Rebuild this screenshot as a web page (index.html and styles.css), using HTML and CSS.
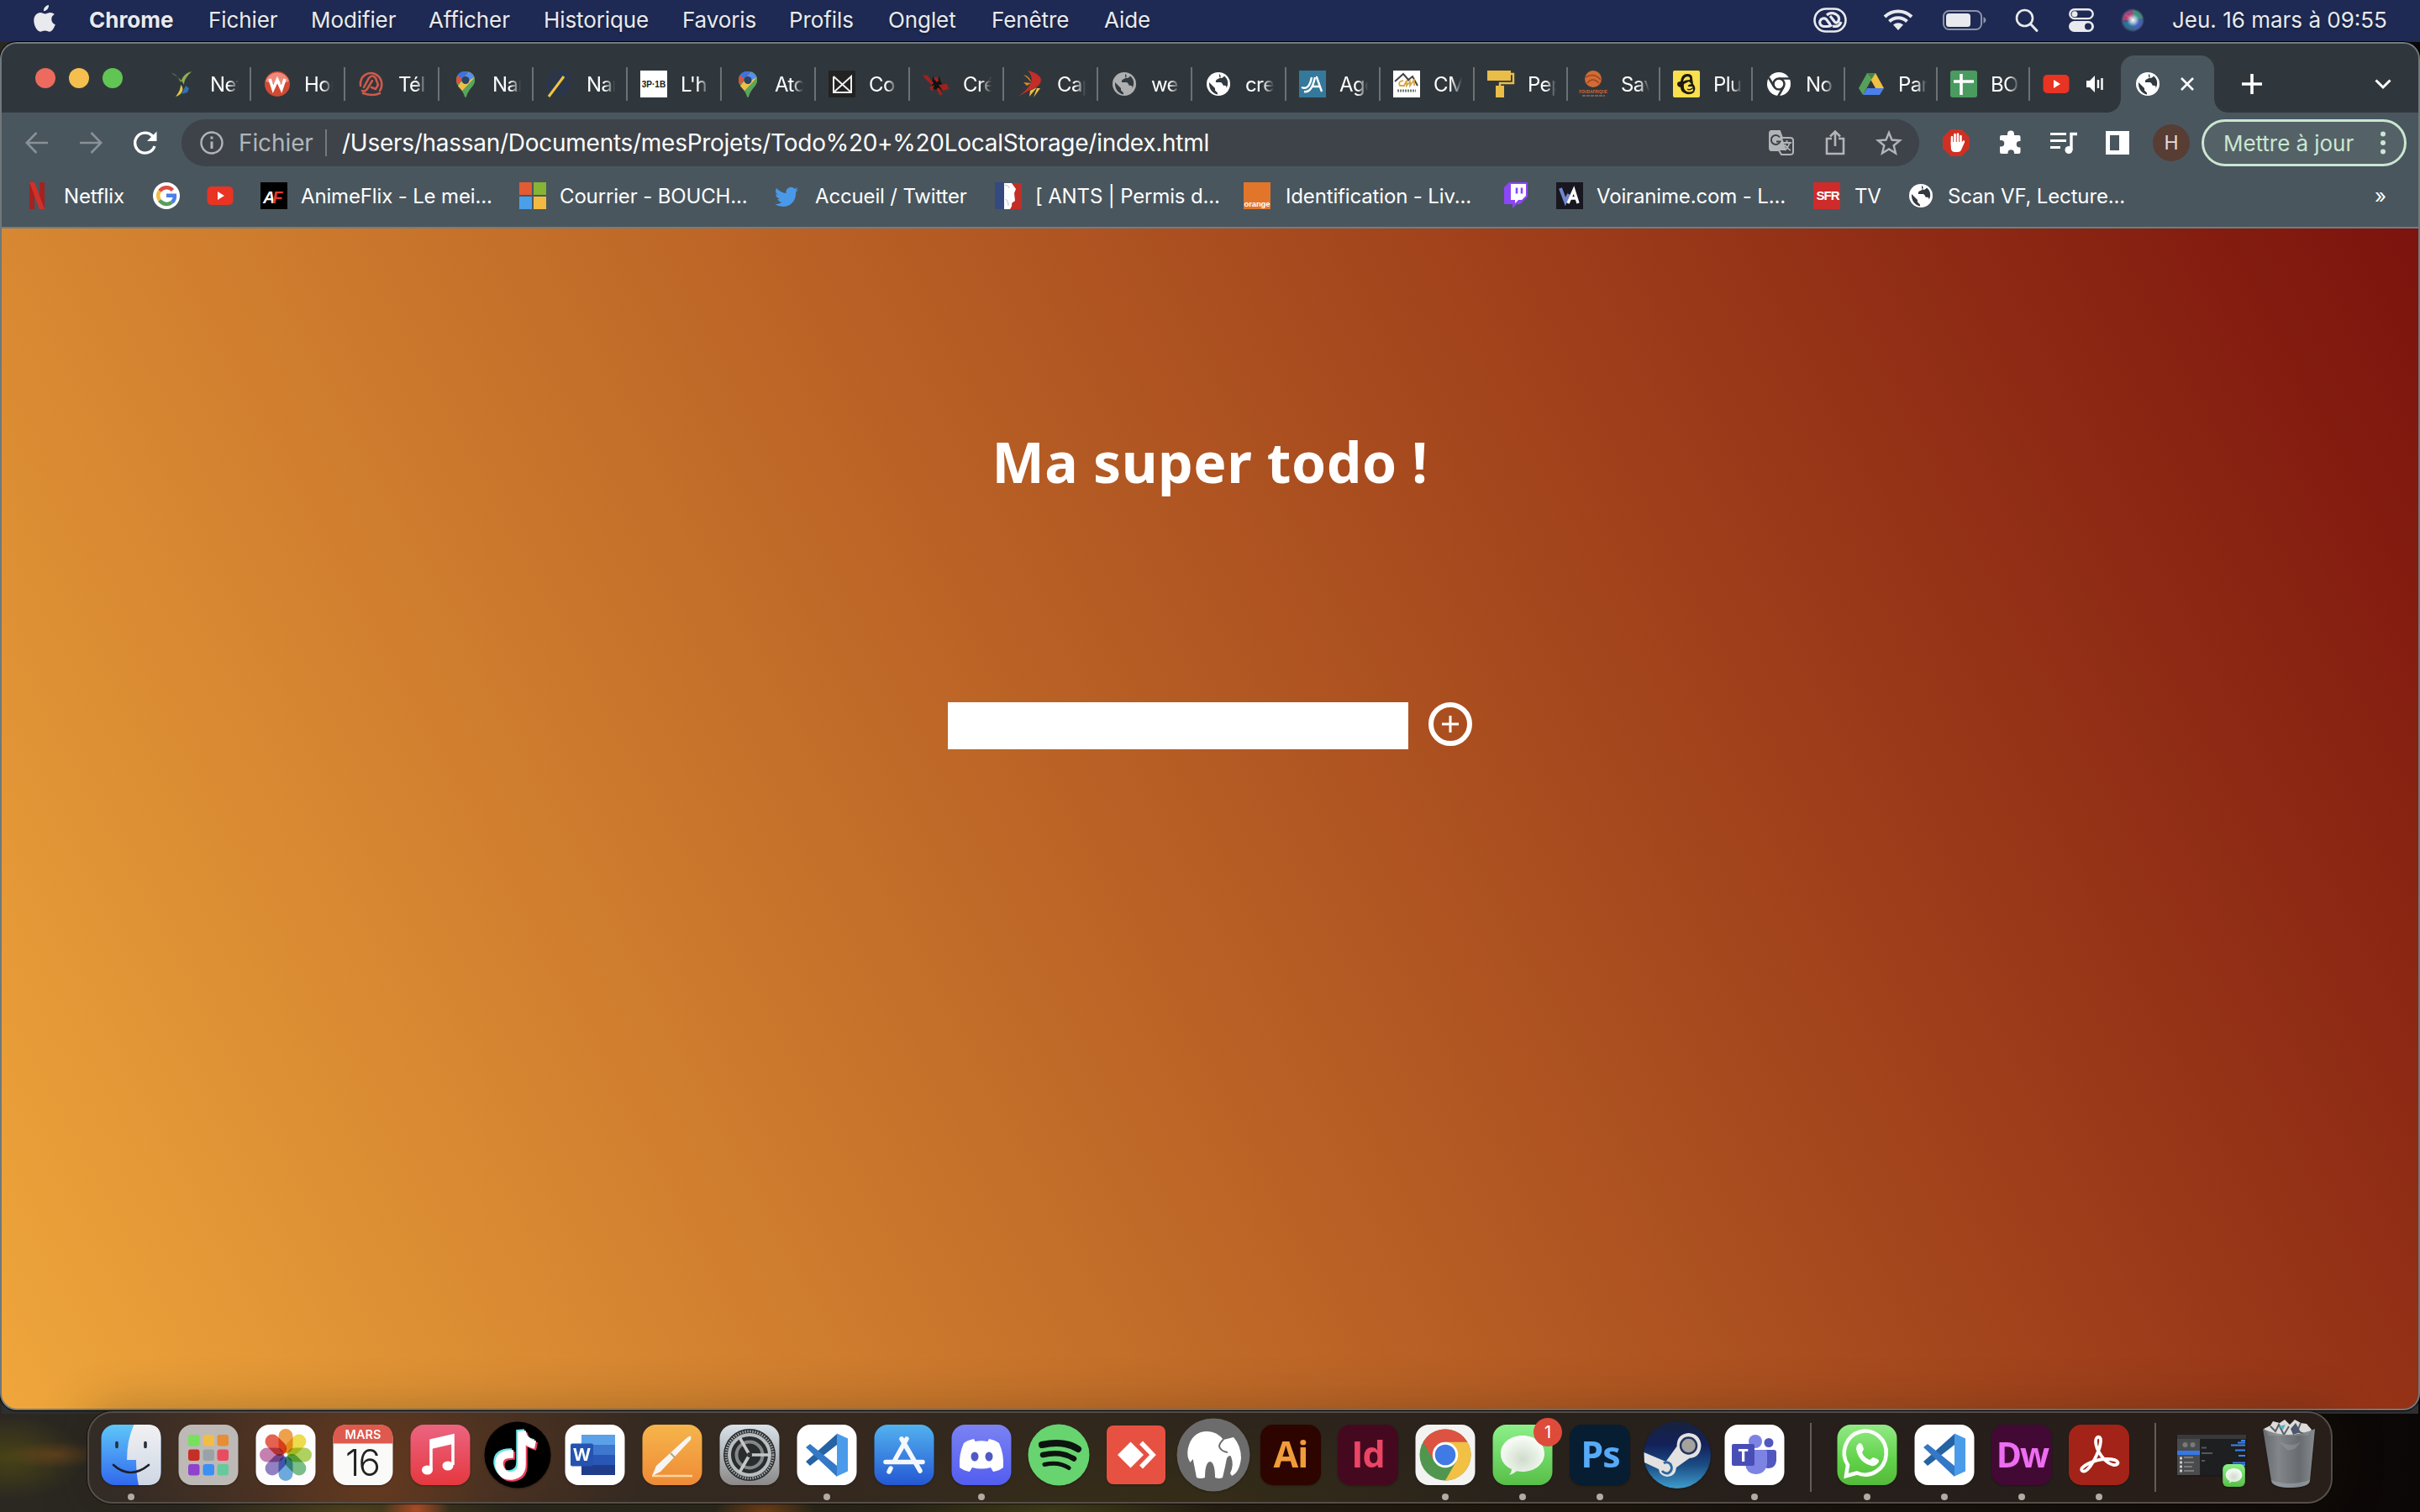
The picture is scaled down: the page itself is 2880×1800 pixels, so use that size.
FILE: index.html
```html
<!DOCTYPE html>
<html lang="fr">
<head>
<meta charset="utf-8">
<title>Ma super todo !</title>
<link rel="stylesheet" href="styles.css">
</head>
<body>
<svg class="defs" width="0" height="0">
  <defs>
    <linearGradient id="gFinder" x1="0" y1="0" x2="0" y2="1"><stop offset="0" stop-color="#5fc6f8"/><stop offset="1" stop-color="#3169ee"/></linearGradient>
    <linearGradient id="gFace" x1="0" y1="0" x2="0" y2="1"><stop offset="0" stop-color="#f1f1f3"/><stop offset="1" stop-color="#ced7e4"/></linearGradient>
    <linearGradient id="gMusic" x1="0" y1="0" x2="0" y2="1"><stop offset="0" stop-color="#ec6480"/><stop offset="1" stop-color="#e5383f"/></linearGradient>
    <linearGradient id="gPages" x1="0" y1="0" x2="0" y2="1"><stop offset="0" stop-color="#f6b54b"/><stop offset="1" stop-color="#ef8a36"/></linearGradient>
    <linearGradient id="gPrefs" x1="0" y1="0" x2="0" y2="1"><stop offset="0" stop-color="#d8e2ea"/><stop offset="1" stop-color="#8b8988"/></linearGradient>
    <linearGradient id="gStore" x1="0" y1="0" x2="0" y2="1"><stop offset="0" stop-color="#52b2ef"/><stop offset="1" stop-color="#2457d3"/></linearGradient>
    <linearGradient id="gDiscord" x1="0" y1="0" x2="0" y2="1"><stop offset="0" stop-color="#7a82f2"/><stop offset="1" stop-color="#535df0"/></linearGradient>
    <linearGradient id="gGreen" x1="0" y1="0" x2="0" y2="1"><stop offset="0" stop-color="#8cf089"/><stop offset="1" stop-color="#57bf47"/></linearGradient>
    <linearGradient id="gWhats" x1="0" y1="0" x2="0" y2="1"><stop offset="0" stop-color="#92ea86"/><stop offset=".6" stop-color="#5fd248"/><stop offset="1" stop-color="#55b93b"/></linearGradient>
    <linearGradient id="gSteam" x1="0" y1="0" x2="0" y2="1"><stop offset="0" stop-color="#17233c"/><stop offset=".35" stop-color="#13215a"/><stop offset=".65" stop-color="#1b4c84"/><stop offset="1" stop-color="#3f9ccb"/></linearGradient>
    <linearGradient id="gBin" x1="0" y1="0" x2="1" y2="0"><stop offset="0" stop-color="#6b7176"/><stop offset=".3" stop-color="#8a8f93"/><stop offset=".7" stop-color="#6d7377"/><stop offset="1" stop-color="#8e9498"/></linearGradient>
    <radialGradient id="gBubble" cx=".5" cy=".6" r=".6"><stop offset="0" stop-color="#cfdccb"/><stop offset="1" stop-color="#fbfffa"/></radialGradient>
    <radialGradient id="gSiri"><stop offset="0" stop-color="#fff"/><stop offset=".5" stop-color="#c5dcec" stop-opacity=".7"/><stop offset="1" stop-color="#8fb6d8" stop-opacity="0"/></radialGradient>
    <symbol id="globe" viewBox="0 0 32 32"><circle cx="16" cy="16" r="14" fill="currentColor"/><path d="M5 14l7 7v2.500l3 3v2C8 27 4.500 21 5 14zM17 4c3 2 1.500 5-1.500 6-2.500 1-3 2-2.500 4h6c2 1 2 3 3 4 3-1 4 1 3.500 3 3-5 2-11-2.500-14.500-2 2-4 4-6 .500z" fill="#323a3f"/></symbol>
    <symbol id="pin" viewBox="0 0 32 32"><path d="M16 1C9 1 5 6 5 11.500 5 18 12 21 15 31q1 2 2 0C20 21 27 18 27 11.500 27 6 23 1 16 1z" fill="#58a55c"/><path d="M16 1C11 1 8 3 6.500 5.500L12 10 20 1.700Q18 1 16 1z" fill="#3d72e0"/><path d="M20 1.700L11.500 12 6 17Q5 14 5 11.500 5 8 6.500 5.500L12 10z" fill="#d6543f"/><path d="M20 1.700Q25.500 4 26.500 9L12 24 7 18.500z" fill="#f0bf45"/><path d="M20 1.700Q27 4.500 27 11.500 27 16 23 20L13 25.500 26 9z" fill="#58a55c"/><path d="M20 1.700Q25.500 4 26.500 8L18 13 15 8z" fill="#568ff1"/><circle cx="16" cy="11.500" r="4.500" fill="#2a4368"/></symbol>
    <symbol id="yt" viewBox="0 0 32 32"><rect x=".5" y="5" width="31" height="22" rx="5" fill="#e93323"/><path d="M13 11l8 5-8 5z" fill="#fff"/></symbol>
    <symbol id="vscode" viewBox="0 0 72 72"><rect x=".5" width="71" height="72" rx="16" fill="#fff"/><path d="M11 44l5 5L48 24V11z" fill="#2563a4"/><path d="M11 27l5-4 32 26v13z" fill="#3478c6"/><path d="M48 10.500l13 6v39l-13 6z" fill="#4a9bea"/></symbol>
    <symbol id="messages" viewBox="0 0 72 72"><rect x=".5" width="71" height="72" rx="16" fill="url(#gGreen)"/><path d="M36 13c15 0 26 9.500 26 21.500S51 56 36 56q-4 0-7-.800Q25 59 20 60q3-3 3-7-13-6-13-18.500C10 22.500 21 13 36 13z" fill="url(#gBubble)"/></symbol>
  </defs>
</svg>

<div class="desktop">
  <header class="menubar">
    <nav class="menus">
      <svg class="apple" viewBox="0 0 26 32"><path d="M18 0c.4 3.600-2.600 7.300-6 7.200C11.600 3.700 14.600.4 18 0zM24.800 11c-2.400 1.500-3.600 3.400-3.500 6 0 3 1.600 5.200 4.500 6.300C24 28 21.800 31.700 19 31.700c-2.200 0-2.900-1.200-5.500-1.200-2.700 0-3.500 1.200-5.500 1.200C4.500 31.700.3 25 .3 18.600c0-6 3.800-9.600 7.800-9.600 2.300 0 3.900 1.400 5.700 1.400 1.700 0 3.200-1.500 6.100-1.500 1.900 0 3.700.7 4.900 2.100z" fill="#e9eaee"/></svg>
      <b>Chrome</b><span>Fichier</span><span>Modifier</span><span>Afficher</span><span>Historique</span><span>Favoris</span><span>Profils</span><span>Onglet</span><span>Fenêtre</span><span>Aide</span>
    </nav>
    <div class="status">
      <svg viewBox="0 0 40 30" width="40" height="30"><rect x="1.500" y="1.500" width="37" height="27" rx="13.500" fill="none" stroke="#e9eaee" stroke-width="2.600"/><path d="M20 20l-4.500-6a4.800 4.800 0 10-3.500 8.500h5q3 0 5-2M20 10l5 6.500q2 3.500 5-.500 2-5-3-8-7-3-11 1M23 22q8 2 10-5" fill="none" stroke="#e9eaee" stroke-width="3.200"/></svg>
      <svg viewBox="0 0 36 26" width="36" height="26"><path d="M2 9a23 23 0 0132 0M7.500 14.500a15 15 0 0121 0" fill="none" stroke="#e9eaee" stroke-width="4"/><path d="M18 25l-6-6.500q6-4.500 12 0z" fill="#e9eaee"/></svg>
      <svg viewBox="0 0 52 24" width="52" height="24"><rect x="1" y="1" width="45" height="22" rx="6.500" fill="none" stroke="#8d93ab" stroke-width="2"/><rect x="4" y="4" width="29" height="16" rx="3.500" fill="#e9eaee"/><path d="M48.500 8q3 1.500 3 4t-3 4z" fill="#8d93ab"/></svg>
      <svg viewBox="0 0 28 28" width="28" height="28"><circle cx="11.500" cy="11.500" r="9.500" fill="none" stroke="#e9eaee" stroke-width="2.600"/><path d="M18.500 18.500l7.500 8" stroke="#e9eaee" stroke-width="3" stroke-linecap="round"/></svg>
      <svg viewBox="0 0 30 28" width="30" height="28"><rect x="1.300" y="1.300" width="27.400" height="10.800" rx="5.400" fill="none" stroke="#e9eaee" stroke-width="2.400"/><circle cx="7" cy="6.700" r="3.500" fill="#e9eaee"/><rect x="0" y="15" width="30" height="13" rx="6.500" fill="#e9eaee"/><circle cx="23" cy="21.500" r="4" fill="#1e2a53"/></svg>
      <svg viewBox="0 0 28 28" width="28" height="28"><circle cx="14" cy="14" r="13.500" fill="#3a4a68"/><path d="M2 14Q3 3 14 2q4 5-1 9-5 5-11 3z" fill="#a8437c"/><path d="M14 2q10 1 12 10-6 3-11 0z" fill="#3f8f78"/><path d="M2 15q6 2 12-1l2 12Q4 25 2 15z" fill="#2f6f95"/><path d="M26 13q0 10-10 13-2-6 0-12 5-3 10-1z" fill="#4562b8"/><path d="M5 8q8-1 10 6-6 0-10-6z" fill="#e0436b"/><circle cx="14.500" cy="14" r="8" fill="url(#gSiri)"/></svg>
      <time>Jeu. 16 mars à 09:55</time>
    </div>
  </header>

  <main class="window">
    <div class="tabstrip">
      <div class="lights"><i class="red"></i><i class="yellow"></i><i class="green"></i></div>
      <div class="tabs">
        <div class="tab"><svg viewBox="0 0 32 32"><path d="M2 3c5 1 9 6 11 11 2-6 5-11 13-13-5 5-9 10-9 16-3-6-8-10-15-14z" fill="#8fae52"/><path d="M13 17c5 4 2 12-6 14 4-5 6-9 6-14z" fill="#e5c83e"/><path d="M14 28l5-10 4 3-2 5z" fill="#2f71b8"/></svg><span>Net</span></div>
        <div class="tab"><svg viewBox="0 0 32 32"><circle cx="16" cy="16" r="15" fill="#d14a33"/><path d="M2 13a14.500 14.500 0 0128 0q-14 5-28 0z" fill="#ee8a7c"/><path d="M7 10l4 12 5-11 5 11 4-12" fill="none" stroke="#fff" stroke-width="3.600"/></svg><span>Hor</span></div>
        <div class="tab"><svg viewBox="0 0 32 32"><g fill="none" stroke="#cf5a4b" stroke-width="2.600" stroke-linecap="round"><path d="M3 18C2 6 12 1 20 4c9 4 10 14 6 20"/><path d="M7 20L13 9q4-5 8 0l3 8-3 5-5-2"/><path d="M17 12l-6 10q-3 4-6 2M6 27q12 4 20 0"/></g></svg><span>Tél</span></div>
        <div class="tab"><svg><use href="#pin"/></svg><span>Nan</span></div>
        <div class="tab"><svg viewBox="0 0 32 32"><g fill="none" stroke="#26355a" stroke-width="2.600"><path d="M4 24C-1 10 9 1 17 2q9 1 12 10M12 30l13-18M19 30l9-14M8 20L20 4"/></g><path d="M3 31L21 7" stroke="#f0c544" stroke-width="3"/></svg><span>Nan</span></div>
        <div class="tab"><svg viewBox="0 0 32 32"><rect width="32" height="32" fill="#fff"/><text x="16" y="20" text-anchor="middle" class="fav8">3P·1B</text></svg><span>L'h</span></div>
        <div class="tab"><svg><use href="#pin"/></svg><span>Ato</span></div>
        <div class="tab"><svg viewBox="0 0 32 32"><rect width="32" height="32" fill="#222"/><path d="M6 7v19h21V7L6 26M6 7l21 19" fill="none" stroke="#eee" stroke-width="2"/></svg><span>Co</span></div>
        <div class="tab"><svg viewBox="0 0 32 32"><g fill="#111"><circle cx="17" cy="17" r="6"/><path d="M12 6l3 9-4 8M20 6l-2 9 5 10"/></g><path d="M0 5l6 1 5 8-5-1zM19 17l10-1 2 6-7 2zM8 20l6-3-3 8z" fill="#a3211c"/><path d="M3 7l9 9M15 8l3 5M18 21l4 8" stroke="#a3211c" stroke-width="3.400"/></svg><span>Cré</span></div>
        <div class="tab"><svg viewBox="0 0 32 32"><path d="M13 0c18 4 24 16 1 24-4 2-8 5-12 7C14 21 24 12 13 0z" fill="#c42d28"/><path d="M8 5q8 2 9 9-3-5-9-9zM8 14l9 1-5 3z" fill="#e3872d"/><path d="M16 24l8-4-9 11zM24 21l4 0-8 11z" fill="#efc044"/></svg><span>Cap</span></div>
        <div class="tab dim"><svg><use href="#globe"/></svg><span>we</span></div>
        <div class="tab"><svg><use href="#globe"/></svg><span>cre</span></div>
        <div class="tab"><svg viewBox="0 0 32 32"><rect width="32" height="32" fill="#34799c"/><path d="M3 20q9 4 12-12M6 25q9 2 13-17M20 8h1l6 17M16 19h9" fill="none" stroke="#fff" stroke-width="2.400"/></svg><span>Age</span></div>
        <div class="tab"><svg viewBox="0 0 32 32"><rect width="32" height="32" fill="#fff"/><path d="M2 13L12 4l7 8M17 12l6-5 6 11" fill="none" stroke="#444" stroke-width="2"/><path d="M12 12q-7 1-4 6h5l3-6v6l4-5v5l5-7v7" fill="none" stroke="#d5a642" stroke-width="1.800"/><path d="M5 24h22" stroke="#777" stroke-width="3" stroke-dasharray="2 1"/></svg><span>CM</span></div>
        <div class="tab s1"><svg viewBox="0 0 32 32"><path d="M0 0h28v12H0zM10 18h10v14H10z" fill="#eabd48"/><path d="M28 4h3v11H15v4" fill="none" stroke="#eabd48" stroke-width="2.400"/></svg><span>Pep</span></div>
        <div class="tab s2"><svg viewBox="0 0 32 32"><circle cx="15" cy="10" r="10" fill="#d26b35"/><path d="M6 8q10-6 18 3M8 15q6-8 14 0" stroke="#9e4420" fill="none" stroke-width="1.500"/><text x="15" y="27" text-anchor="middle" class="fav5">FOUDAFRIQUE</text><path d="M2 30h27" stroke="#75605a" stroke-width="2" stroke-dasharray="4 1"/></svg><span>Sav</span></div>
        <div class="tab s2"><svg viewBox="0 0 32 32"><rect width="32" height="32" rx="2" fill="#fbe04d"/><path d="M9 13Q10 4 17 4q6 0 6 5l1 7q4 4 1 10-5 4-11 1-5-2-5-7-4-1-4-4 0-3 4-3z" fill="#1b1a14"/><path d="M12 13q1-6 6-6 3 1 2 4-5 0-8 2zM13 16l6-3 3 3q-5 1-4 3h5l1 5q-5 3-9 0-3-3-2-8z" fill="#fbe04d"/><path d="M17 22q3 2 6-1" stroke="#1b1a14" stroke-width="1.500" fill="none"/></svg><span>Plu</span></div>
        <div class="tab s2"><svg viewBox="0 0 32 32"><circle cx="16" cy="16" r="14" fill="#fff"/><g fill="none" stroke="#30373c" stroke-width="2.600"><circle cx="16" cy="16" r="6.500"/><path d="M16 9.500h13M10.500 19.500L4 8.500M21.500 19.500L15 31"/></g></svg><span>No</span></div>
        <div class="tab s2"><svg viewBox="0 0 32 32"><path d="M11 3L1 21l5 8 10-18z" fill="#55a05a"/><path d="M11 3h10l10 18H21z" fill="#f2c042"/><path d="M6 29l5-8h20l-5 8z" fill="#4a80ea"/><path d="M11 3h10l-5 8z" fill="#3a8a4a"/></svg><span>Par</span></div>
        <div class="tab s2"><svg viewBox="0 0 32 32"><rect width="32" height="32" rx="3" fill="#499b5f"/><path d="M13 4v25M4 13h24" stroke="#fff" stroke-width="3.600"/></svg><span>BO</span></div>
        <div class="tab muted"><svg><use href="#yt"/></svg><svg class="speaker" viewBox="0 0 22 22"><path d="M0 7h4l6-6v20l-6-6H0z" fill="#fff"/><path d="M14 6v10M18.500 4v14" stroke="#fff" stroke-width="2.400"/></svg></div>
        <div class="tab active"><svg><use href="#globe"/></svg><svg class="close" viewBox="0 0 18 18"><path d="M2 2l14 14M16 2L2 16" stroke="#fff" stroke-width="2.600"/></svg></div>
      </div>
      <svg class="plus" viewBox="0 0 24 24"><path d="M12 0v24M0 12h24" stroke="#fff" stroke-width="3.600"/></svg>
      <svg class="chev" viewBox="0 0 20 12"><path d="M1.500 1.500l8.500 8.500 8.500-8.500" fill="none" stroke="#fff" stroke-width="3"/></svg>
    </div>

    <div class="toolbar">
      <svg class="ic nav" viewBox="0 0 32 32"><path d="M29 16H4M15.500 4L3.800 16l11.700 12" fill="none" stroke="#899197" stroke-width="2.600"/></svg>
      <svg class="ic nav" viewBox="0 0 32 32"><path d="M3 16h25M16.500 4l11.700 12-11.700 12" fill="none" stroke="#899197" stroke-width="2.600"/></svg>
      <svg class="ic" viewBox="0 0 32 32"><path d="M28 20A12 12 0 1125.500 8" fill="none" stroke="#fff" stroke-width="3.400"/><path d="M30.500 2.500v11.500H19z" fill="#fff"/></svg>
      <div class="omnibox">
        <svg class="ic" viewBox="0 0 32 32"><circle cx="16" cy="16" r="12.500" fill="none" stroke="#b2b5b8" stroke-width="2.400"/><path d="M16 14.500V23M16 8.500v3" stroke="#b2b5b8" stroke-width="3"/></svg>
        <span class="scheme">Fichier</span><i class="bar"></i><span class="url">/Users/hassan/Documents/mesProjets/Todo%20+%20LocalStorage/index.html</span>
        <svg class="ic" viewBox="0 0 32 32"><path d="M4 2h10l3 8h9q4 0 4 3v14q0 3-4 3H16l-3-5H4q-2 0-2-3V5q0-3 2-3z" fill="none" stroke="#b2b5b8" stroke-width="2"/><path d="M3 2h11l8 23H3z" fill="#b2b5b8"/><path d="M14 9.500a5.500 5.500 0 10.500 5H10" fill="none" stroke="#3d4349" stroke-width="2"/><path d="M17 16h11M22.500 13v3M26 16q-3 7-6 9M20 18q3 5 7 7" fill="none" stroke="#b2b5b8" stroke-width="1.800"/></svg>
        <svg class="ic" viewBox="0 0 32 32"><path d="M12 11H6v18h20V11h-6M16 20V3M10 8.500L16 2.500l6 6" fill="none" stroke="#b2b5b8" stroke-width="2.600"/></svg>
        <svg class="ic" viewBox="0 0 32 32"><path d="M16 4l3.500 8.500 9.500.7-7.300 6L24 28.500l-8-5-8 5 2.300-9.300-7.300-6 9.500-.7z" fill="none" stroke="#b2b5b8" stroke-width="2.400"/></svg>
      </div>
      <div class="exts">
        <svg class="ic" viewBox="0 0 32 32"><path d="M9.500 0h13L32 9.500v13L22.500 32h-13L0 22.500v-13z" fill="#cf3022"/><path d="M11 9v9M14.500 6v11M18 5.500V17M21.500 8v10" stroke="#fff" stroke-width="2.600" stroke-linecap="round"/><path d="M9.700 15h13.100l2-2q2 0 1 3l-4 9q-1 2-4 2h-3q-5 0-5-5z" fill="#fff"/></svg>
        <svg class="ic" viewBox="0 0 32 32"><path d="M12 6.500a4 4 0 018 0V8h5.500q2 0 2 2v5h-1a3.700 3.700 0 000 7.500h1V28q0 2-2 2H20v-1.500a3.800 3.800 0 00-7.500 0V30H5q-2 0-2-2v-6.500h1.500a3.700 3.700 0 000-7.500H3v-4q0-2 2-2h7z" fill="#fff" transform="translate(1 -1)"/></svg>
        <svg class="ic" viewBox="0 0 32 32"><path d="M0 5.500h19M0 13.500h19M0 21.500h12" stroke="#fff" stroke-width="3"/><path d="M25 25V5.500h7" fill="none" stroke="#fff" stroke-width="3.400"/><circle cx="22" cy="24.500" r="4.500" fill="#fff"/></svg>
        <svg class="ic" viewBox="0 0 32 32"><path d="M4.500 4.500h16v23h-16z" fill="none" stroke="#fff" stroke-width="5"/><path d="M18 2h12v28H18z" fill="#fff"/></svg>
      </div>
      <span class="avatar">H</span>
      <span class="update"><em>Mettre à jour</em><svg viewBox="0 0 6 28" width="6" height="28"><g fill="#cbe7d0"><circle cx="3" cy="3.500" r="3"/><circle cx="3" cy="14" r="3"/><circle cx="3" cy="24.500" r="3"/></g></svg></span>
    </div>

    <div class="bookmarks">
      <svg class="ic" viewBox="0 0 32 32"><path d="M7 0h6v32H7zM19 0h6v32h-6z" fill="#a4221f"/><path d="M7 0h6l12 32h-6z" fill="#d42f28"/></svg><span>Netflix</span>
      <svg class="ic" viewBox="0 0 32 32"><circle cx="16" cy="16" r="16" fill="#fff"/><g fill="none" stroke-width="4.500"><path d="M23.500 9.500A10 10 0 008 10.500" stroke="#dc4e41"/><path d="M8 10.500a10 10 0 000 11" stroke="#f2be42"/><path d="M8 21.500a10 10 0 0014.500 2.300" stroke="#55a05a"/><path d="M22.500 23.800q4-3 3.400-8H16" stroke="#4a80ea"/></g></svg>
      <svg class="ic"><use href="#yt"/></svg>
      <svg class="ic" viewBox="0 0 32 32"><rect width="32" height="32"/><text x="3" y="25" class="af">A<tspan dx="-3" fill="#e23c32">F</tspan></text></svg><span>AnimeFlix - Le mei...</span>
      <svg class="ic" viewBox="0 0 32 32"><path d="M0 0h15v15H0z" fill="#e25b32"/><path d="M17 0h15v15H17z" fill="#86b435"/><path d="M0 17h15v15H0z" fill="#4aa0e8"/><path d="M17 17h15v15H17z" fill="#f3ba41"/></svg><span>Courrier - BOUCH...</span>
      <svg class="ic" viewBox="0 0 32 32"><path d="M30 8.500q-1.500.8-3.300 1 1.800-1 2.500-3.200-1.700 1-3.600 1.400a5.800 5.800 0 00-9.900 5.200Q8.900 12.500 4 6.900 1.400 12 5.800 14.700 4.400 14.600 3.200 14q0 4.400 4.600 5.700-1.200.3-2.500.1 1.200 3.700 5.400 4-3.800 2.900-8.700 2.400 12 6.300 20.500-1.500 5-5 4.700-13.300Q29 10.300 30 8.500z" fill="#4a99e9"/></svg><span>Accueil / Twitter</span>
      <svg class="ic" viewBox="0 0 32 32"><rect y="1" width="32" height="31" fill="#fff"/><path d="M0 0h11v32H0z" fill="#34497f"/><path d="M20 1h12v31H18q3-4 2-7l4-3-1-9 2-5z" fill="#c32e27"/><path d="M12 3q5 1 5 4M13 20q4 4 3 8" stroke="#bbb" fill="none"/></svg><span>[ ANTS | Permis d...</span>
      <svg class="ic" viewBox="0 0 32 32"><rect width="32" height="32" fill="#e1762b"/><text x="16" y="29" text-anchor="middle" class="or">orange</text></svg><span>Identification - Liv...</span>
      <svg class="ic" viewBox="0 0 32 32"><path d="M8 0h22v17l-9 9h-4l-5 5v-5H2V6z" fill="#8c45f7"/><path d="M10 2h18v14l-5 5h-4l-4 4v-4h-5z" fill="#fff"/><path d="M17 6.500v7M23 6.500v7" stroke="#8c45f7" stroke-width="2.600"/></svg>
      <svg class="ic" viewBox="0 0 32 32"><rect width="32" height="32" fill="#181720"/><path d="M5 7l6 16 4-9" fill="none" stroke="#7186cf" stroke-width="4"/><path d="M14 25l7-16 5 16M17 19h8" fill="none" stroke="#fff" stroke-width="3.400"/></svg><span>Voiranime.com - L...</span>
      <svg class="ic" viewBox="0 0 32 32"><rect width="32" height="32" fill="#ce2b2b"/><text x="17" y="21" text-anchor="middle" class="sfr">SFR</text></svg><span>TV</span>
      <svg class="ic"><use href="#globe"/></svg><span>Scan VF, Lecture...</span>
      <span class="more">»</span>
    </div>

    <section class="page">
      <h1>Ma super todo !</h1>
      <form class="entry"><input type="text" aria-label="Todo"><button type="button" aria-label="Ajouter"><svg viewBox="0 0 20 20" width="20" height="20"><path d="M10 0v20M0 10h20" stroke="#fff" stroke-width="3"/></svg></button></form>
    </section>
  </main>

  <footer class="dock">
    <div class="app run"><svg viewBox="0 0 72 72"><rect x=".5" width="71" height="72" rx="16" fill="url(#gFinder)"/><path d="M39.500 0H56q15.500 0 15.500 16v40q0 16-15.500 16H45q-3-13-3-30H31Q31 18 39.500 0z" fill="url(#gFace)"/><path d="M19 21.500v5M53 21.500v5" stroke="#26303c" stroke-width="3.600" stroke-linecap="round"/><path d="M15 48q20 18 42 0" fill="none" stroke="#1c1f26" stroke-width="2.600" stroke-linecap="round"/></svg></div>
    <div class="app"><svg viewBox="0 0 72 72"><rect x=".5" width="71" height="72" rx="16" fill="#bdb9b7"/><g><rect x="12" y="12" width="13.500" height="13.500" rx="3" fill="#77e05c"/><rect x="29.500" y="12" width="13.500" height="13.500" rx="3" fill="#f2bd46"/><rect x="46.500" y="12" width="13.500" height="13.500" rx="3" fill="#e68d35"/><rect x="12" y="29.500" width="13.500" height="13.500" rx="3" fill="#c62f26"/><rect x="29.500" y="29.500" width="13.500" height="13.500" rx="3" fill="#9ba2a5"/><rect x="46.500" y="29.500" width="13.500" height="13.500" rx="3" fill="#ea4c5f"/><rect x="12" y="47" width="13.500" height="13.500" rx="3" fill="#8f42cc"/><rect x="29.500" y="47" width="13.500" height="13.500" rx="3" fill="#3c90f4"/><rect x="46.500" y="47" width="13.500" height="13.500" rx="3" fill="#66c99c"/></g></svg></div>
    <div class="app"><svg viewBox="0 0 72 72"><rect x=".5" width="71" height="72" rx="16" fill="#fdfdfd"/><g class="petals"><rect x="27.500" y="5" width="17" height="29" rx="8.500" fill="#f0993c"/><rect x="27.500" y="5" width="17" height="29" rx="8.500" fill="#eedb3e" transform="rotate(45 36 36)"/><rect x="27.500" y="5" width="17" height="29" rx="8.500" fill="#aad052" transform="rotate(90 36 36)"/><rect x="27.500" y="5" width="17" height="29" rx="8.500" fill="#6dbb7d" transform="rotate(135 36 36)"/><rect x="27.500" y="5" width="17" height="29" rx="8.500" fill="#62a4dd" transform="rotate(180 36 36)"/><rect x="27.500" y="5" width="17" height="29" rx="8.500" fill="#8a77bf" transform="rotate(225 36 36)"/><rect x="27.500" y="5" width="17" height="29" rx="8.500" fill="#c176ac" transform="rotate(270 36 36)"/><rect x="27.500" y="5" width="17" height="29" rx="8.500" fill="#e55643" transform="rotate(315 36 36)"/></g></svg></div>
    <div class="app"><svg viewBox="0 0 72 72"><rect x=".5" width="71" height="72" rx="16" fill="#fafaf9"/><path d="M.5 22.500V16Q.5 0 16.500 0h39q16 0 16 16v6.500z" fill="#df5a4e"/><text x="36" y="17.300" text-anchor="middle" class="mon">MARS</text><text x="35" y="61" text-anchor="middle" class="day">16</text></svg></div>
    <div class="app"><svg viewBox="0 0 72 72"><rect x=".5" width="71" height="72" rx="16" fill="url(#gMusic)"/><path d="M25 53V19l26-6v35" fill="none" stroke="#fff" stroke-width="3.600"/><path d="M25 19l26-6v10l-26 6z" fill="#fff"/><ellipse cx="20.500" cy="54" rx="6.500" ry="5.500" fill="#fff"/><ellipse cx="45" cy="49" rx="6.500" ry="5.500" fill="#fff"/></svg></div>
    <div class="app"><svg viewBox="0 0 72 72"><circle cx="36" cy="36" r="39.500"/><g fill="none" stroke-width="9.500"><path d="M31 35Q13 34 14 48q3 14 15 13 12-2 12-14V8q2 13 16 16" stroke="#69e7e5" transform="translate(-2 -2)"/><path d="M31 35Q13 34 14 48q3 14 15 13 12-2 12-14V8q2 13 16 16" stroke="#e8415d" transform="translate(2 2)"/><path d="M31 35Q13 34 14 48q3 14 15 13 12-2 12-14V8q2 13 16 16" stroke="#fff"/></g></svg></div>
    <div class="app"><svg viewBox="0 0 72 72"><rect x=".5" width="71" height="72" rx="16" fill="#fff"/><path d="M20 12h40v12H20z" fill="#5ba1e8"/><path d="M20 24h40v12H20z" fill="#3e77ce"/><path d="M20 36h40v12H20z" fill="#2957b8"/><path d="M20 48h40v12H20z" fill="#1f3d8a"/><rect x="7" y="22.500" width="27" height="27" rx="2" fill="#2553b0"/><text x="20.500" y="43" text-anchor="middle" class="word">W</text></svg></div>
    <div class="app"><svg viewBox="0 0 72 72"><rect x=".5" width="71" height="72" rx="16" fill="url(#gPages)"/><path d="M12 61h48" stroke="#fbd7a0" stroke-width="2.500"/><path d="M12 61l5-12 36-33q7-6 5 2L22 56z" fill="#f6f5f2"/><path d="M34 34l5 5" stroke="#b0a090" stroke-width="2"/></svg></div>
    <div class="app"><svg viewBox="0 0 72 72"><rect x=".5" width="71" height="72" rx="16" fill="url(#gPrefs)"/><circle cx="36" cy="36" r="31" fill="#2a2c2e"/><circle cx="36" cy="36" r="28" fill="none" stroke="#a5aaac" stroke-width="3" stroke-dasharray="1.500 1.500"/><circle cx="36" cy="36" r="24" fill="none" stroke="#b9bec1" stroke-width="4"/><circle cx="36" cy="36" r="15.500" fill="none" stroke="#84888a" stroke-width="4"/><path d="M36 36h23M36 36L24 15M36 36L24 57" stroke="#c4c8ca" stroke-width="3.600"/><circle cx="36" cy="36" r="3" fill="#333"/></svg></div>
    <div class="app run"><svg><use href="#vscode"/></svg></div>
    <div class="app"><svg viewBox="0 0 72 72"><rect x=".5" width="71" height="72" rx="16" fill="url(#gStore)"/><g stroke="#f4f8fd" stroke-width="5.500" stroke-linecap="round"><path d="M14 44.500h44M39 17L25 42M33 17l22 38M20 52l-2 4"/></g></svg></div>
    <div class="app run"><svg viewBox="0 0 72 72"><rect x=".5" width="71" height="72" rx="16" fill="url(#gDiscord)"/><path d="M27 17l1.500 3q7-1.500 15 0L45 17q8 1.500 12 5 6 13 5 29-5 4-12 5l-3-5q-11 3-22 0l-3 5q-7-1-12-5-1-16 5-29 4-3.500 12-5z" fill="#fff"/><ellipse cx="28" cy="38" rx="4.500" ry="5.500" fill="#5059c6"/><ellipse cx="45" cy="38" rx="4.500" ry="5.500" fill="#5059c6"/></svg></div>
    <div class="app"><svg viewBox="0 0 72 72"><circle cx="36" cy="36" r="36.500" fill="#67d470"/><g fill="none" stroke="#0d130e" stroke-linecap="round"><path d="M16 24q26-6 43 5" stroke-width="8"/><path d="M17 36q22-5 37 4.500" stroke-width="6.500"/><path d="M19 47.500q17-4 29 4" stroke-width="5"/></g></svg></div>
    <div class="app"><svg viewBox="0 0 72 72"><rect x="1" y="1" width="70" height="70" rx="8" fill="#e75142"/><path d="M29.500 20.500L45 36 29.500 51.500 14 36z" fill="#fff"/><path d="M42 21.500L56 36 42 50.500" fill="none" stroke="#fff" stroke-width="5.500"/></svg></div>
    <div class="app"><svg viewBox="0 0 72 72"><circle cx="36" cy="36" r="43.500" fill="#6c6c6c"/><path d="M8.400 45Q4 38 5.700 29 10 8 29 8q11 0 19 10l12-3q9 10 9 25-2 17-11 21l-2-3q5-10 1-20-2-3-5 2l-2 10-3 13q-4 2-9 0 0-18-6-19-6 1-6 19-5 2-10 0L11.700 41z" fill="#fff"/><path d="M48 17.500q-5 5-5 8.500 2 6 10 7" fill="none" stroke="#6c6c6c" stroke-width="2"/></svg></div>
    <div class="app"><svg viewBox="0 0 72 72"><rect width="72" height="72" rx="15" fill="#2d0400"/><text x="36" y="51" text-anchor="middle" class="adobe" fill="#f09c3a">Ai</text></svg></div>
    <div class="app"><svg viewBox="0 0 72 72"><rect width="72" height="72" rx="15" fill="#45091f"/><text x="36" y="51" text-anchor="middle" class="adobe" fill="#eb4566">Id</text></svg></div>
    <div class="app run"><svg viewBox="0 0 72 72"><rect x=".5" width="71" height="72" rx="16" fill="#f3f3f2"/><circle cx="36" cy="36" r="30.500" fill="#51964f"/><path d="M9.600 20.700A30.500 30.500 0 0162.400 20.700H36L22.800 43.600z" fill="#dd5341"/><path d="M62.400 20.700A30.500 30.500 0 0136 66.500L49.200 43.600 36 20.700z" fill="#f2c044"/><circle cx="36" cy="36" r="15.200" fill="#fff"/><circle cx="36" cy="36" r="12.300" fill="#3f7ae5"/></svg></div>
    <div class="app run"><svg><use href="#messages"/></svg><span class="badge">1</span></div>
    <div class="app run"><svg viewBox="0 0 72 72"><rect width="72" height="72" rx="15" fill="#061d32"/><text x="36.500" y="51" text-anchor="middle" class="adobe" fill="#56aaf7">Ps</text></svg></div>
    <div class="app"><svg viewBox="0 0 72 72"><circle cx="36" cy="36" r="40" fill="url(#gSteam)"/><path d="M-3.500 33l26 11 13-18q0-15 14-16 14 1 15 15-1 14-14 15L35 51q-1 11-11 11-9-1-10-9L-3 45z" fill="#e3e2e1"/><circle cx="49.500" cy="25" r="9.500" fill="#a5a29e" stroke="#25355c" stroke-width="2.500"/><path d="M20 46q4-3 8 1 4 7-3 11-5 0-7-3" fill="none" stroke="#2e68a0" stroke-width="3"/></svg></div>
    <div class="app run"><svg viewBox="0 0 72 72"><rect x=".5" width="71" height="72" rx="16" fill="#fff"/><circle cx="37" cy="20" r="8" fill="#7d83e3"/><circle cx="53" cy="21.500" r="5.500" fill="#5157bf"/><path d="M45 30h14q3 0 3 3v10q-1 9-10 9-7-1-7-8z" fill="#5157bf"/><path d="M25 30h23q3 0 3 3v14q-2 12-14 12-11-1-12-12z" fill="#7d83e3"/><rect x="9" y="23" width="27" height="26" rx="2" fill="#494eb7"/><text x="22.500" y="43.500" text-anchor="middle" class="word">T</text></svg></div>
    <i class="rule"></i>
    <div class="app run"><svg viewBox="0 0 72 72"><rect x=".5" width="71" height="72" rx="16" fill="url(#gWhats)"/><path d="M13 48A25 26 0 1124 57.500L11 61z" fill="none" stroke="#fbfdfa" stroke-width="4.600"/><path d="M27 22q3-1 5 7-1 3-2 4 2 6 9 9l4-3q8 2 7 5-3 6-9 5-15-4-18-20 0-5 4-7z" fill="#fbfdfa"/></svg></div>
    <div class="app run"><svg><use href="#vscode"/></svg></div>
    <div class="app run"><svg viewBox="0 0 72 72"><rect width="72" height="72" rx="15" fill="#420935"/><text x="36.500" y="51" text-anchor="middle" class="adobe dw" fill="#ed6df1">Dw</text></svg></div>
    <div class="app run"><svg viewBox="0 0 72 72"><rect width="72" height="72" rx="15" fill="#a32318"/><path d="M16 55c-5-4 14-14 29-14 18 0 15 8 8 7C43 46 32 30 32 20c0-7 7-7 6 0C37 32 23 60 16 55z" fill="none" stroke="#fff" stroke-width="3.800"/></svg></div>
    <i class="rule"></i>
    <div class="app"><svg class="thumb" viewBox="0 0 82 48" width="82" height="48"><rect width="82" height="48" fill="#1d1f21"/><rect width="27" height="48" fill="#4a4b4d"/><rect width="82" height="5" fill="#38393b"/><rect y="19" width="27" height="5" fill="#3478e8"/><circle cx="9.500" cy="12" r="3" fill="#77797b"/><circle cx="18.500" cy="12" r="3" fill="#77797b"/><path d="M3 28h3M3 33h3M3 38h3M3 43h3" stroke="#ccc" stroke-width="3"/><path d="M8 27h11M8 33h12M8 38h10M8 43h12" stroke="#8a8b8d" stroke-width="1.500"/><path d="M76 7h5M72 9.500h9M64 12.500h17M69 18.500h12M73 25h8M66 33.500h15M66 36h15" stroke="#3c84ee" stroke-width="2"/><path d="M29 15.500h6M29 22h13M29 31h4" stroke="#55575a" stroke-width="2"/></svg><svg class="mini" viewBox="0 0 72 72"><use href="#messages" width="72" height="72"/></svg></div>
    <div class="app"><svg viewBox="0 0 72 72"><path d="M6 5L14 1l3-5 8 2 6-4 6 6 6-6 7 4 7 1 6 7-5 7H12z" fill="#dedcd9"/><path d="M14 2l6 6 4-8 6 12 6-10M50-2l-4 10 8 3" stroke="#5a5f68" stroke-width="2" fill="none"/><path d="M38 5l6-7 6 11-9 3z" fill="#4d586e"/><path d="M24 2l8-2-3 6z" fill="#4fb6c8"/><path d="M5 5q30 14 62 0l-6 62q-1 8-26 8-19-1-20-8z" fill="url(#gBin)" opacity=".93"/><path d="M15 66q20 8 46 0-1 9-26 9-18-1-20-9z" fill="#a1adb5" opacity=".5"/><path d="M24 20q16 8 26 0-6 12-16 10z" fill="#b8bcbf" opacity=".25"/></svg></div>
  </footer>
</div>
</body>
</html>
```
FILE: styles.css
```css
* { box-sizing: border-box; }
body { margin: 0; width: 2880px; height: 1800px; overflow: hidden; font-family: Inter, "Liberation Sans", sans-serif; color: #fff; }
svg { display: block; overflow: visible; flex: none; }
.defs { position: absolute; }
i, em { font-style: normal; }

.desktop {
  width: 2880px; height: 1800px; display: flex; flex-direction: column;
  background:
    linear-gradient(#2e2f31, #2e2f31) 2px 1640px / 2876px 43px no-repeat,
    radial-gradient(ellipse 60px 16px at 65px 1732px, rgba(122,74,28,.6), transparent),
    radial-gradient(ellipse 90px 50px at 10px 1735px, rgba(84,78,16,.7), transparent),
    radial-gradient(ellipse 40px 30px at 495px 1796px, #c0532c, transparent),
    radial-gradient(ellipse 190px 40px at 420px 1800px, #55461f, transparent),
    radial-gradient(ellipse 60px 30px at 910px 1800px, #7a4218, transparent),
    radial-gradient(ellipse 200px 40px at 1250px 1800px, #42401a, transparent),
    linear-gradient(90deg, #2b2822 0, #2a281c 30%, #241c12 50%, #17110c 75%, #0b0706 100%);
}

.menubar { height: 50px; flex: none; display: flex; justify-content: space-between; align-items: center; background: #1e2a53; font-size: 26px; color: #e9eaee; text-shadow: 0 2px 3px rgba(0,0,0,.35); white-space: nowrap; padding-bottom: 3px; }
.menus { display: grid; grid-template-columns: 66px 142px 122px 140px 137px 165px 127px 118px 123px 134px 61px; padding-left: 40px; align-items: center; letter-spacing: -.1px; }
.menus b { font-weight: 700; letter-spacing: 0; }
.apple { width: 26px; height: 32px; margin-top: -3px; }
.status { display: grid; grid-template-columns: 83px 71px 86px 64px 62px 61px 257px; align-items: center; padding-right: 38px; }

.window { position: relative; height: 1629px; flex: none; display: flex; flex-direction: column; border: 2px solid #6f787c; border-top-color: #747b80; border-radius: 20px; overflow: hidden; box-shadow: 0 0 0 1px #000; background: #49565e; }
.window::after { content: ""; position: absolute; inset: 218px -2px -2px; border: 2px solid rgba(255,255,255,.22); border-top: 0; border-radius: 0 0 20px 20px; }
.tabstrip { height: 82px; flex: none; display: flex; align-items: center; background: #30373c; }
.lights { width: 185px; display: flex; gap: 16px; padding-left: 40px; }
.lights i { width: 24px; height: 24px; border-radius: 50%; }
.red { background: #ec6a5e; }
.yellow { background: #f4bf4f; }
.green { background: #61c554; }
.tabs { display: flex; height: 82px; align-items: center; padding-top: 14px; }
.tab { position: relative; width: 112px; height: 40px; display: flex; align-items: center; gap: 16px; padding-left: 15px; border-right: 2px solid #6c7173; font-size: 24px; }
.tab.s1 { width: 111px; }
.tab.s2 { width: 110px; }
.tab > svg { width: 32px; height: 32px; }
.tab span { width: 34px; overflow: hidden; white-space: nowrap; letter-spacing: -.6px; -webkit-mask-image: linear-gradient(90deg, #000 62%, transparent 100%); mask-image: linear-gradient(90deg, #000 62%, transparent 100%); }
.tab.dim svg { color: #adafb1; }
.tab.muted { width: 108px; border: 0; gap: 20px; }
.tab .speaker { width: 22px; height: 22px; }
.tab.active { width: 111px; height: 68px; border: 0; border-radius: 16px 16px 0 0; background: #49565e; gap: 22px; padding-left: 16px; }
.tab.active::before, .tab.active::after { content: ""; position: absolute; bottom: 0; width: 16px; height: 16px; }
.tab.active::before { left: -16px; background: radial-gradient(circle at 0 0, transparent 15.5px, #49565e 16px); }
.tab.active::after { right: -16px; background: radial-gradient(circle at 100% 0, transparent 15.5px, #49565e 16px); }
.tab .close { width: 18px; height: 18px; }
.plus { width: 24px; height: 24px; margin: 14px 0 0 33px; }
.chev { width: 20px; height: 12px; margin: 14px 0 0 134px; }
.fav8 { font: 700 10px "Liberation Sans", sans-serif; fill: #172021; }
.fav5 { font: 700 4.600px "Liberation Sans", sans-serif; fill: #d26b35; }

.toolbar { height: 72px; flex: none; display: flex; align-items: center; padding-left: 26px; }
.ic { width: 32px; height: 32px; }
.toolbar > .ic { margin-right: 32px; }
.toolbar > .ic:nth-child(3) { margin-right: 28px; }
.omnibox { width: 2068px; height: 56px; border-radius: 28px; background: #3d4349; display: flex; align-items: center; padding: 0 20px; font-size: 28px; white-space: nowrap; }
.scheme { width: 103px; margin-left: 16px; color: #b2b5b8; letter-spacing: -.1px; }
.bar { width: 2px; height: 32px; background: #74797d; margin-right: 18px; }
.url { flex: 1; letter-spacing: -.27px; }
.omnibox .ic + .ic { margin-left: 32px; }
.exts { display: flex; gap: 32px; margin-left: 28px; }
.avatar { width: 44px; height: 44px; border-radius: 50%; margin-left: 26px; background: #573d34; color: #e5d9d4; font-size: 23px; display: grid; place-items: center; }
.update { width: 244px; height: 56px; margin-left: 14px; border: 3px solid #cbe7d0; border-radius: 28px; background: #546167; color: #cbe7d0; font-size: 26px; display: flex; align-items: center; padding-left: 23px; white-space: nowrap; }
.update em { width: 187px; letter-spacing: -.05px; }

.bookmarks { height: 66px; flex: none; padding: 0 0 10px 26px; display: grid; align-items: center; font-size: 24px; white-space: nowrap; border-bottom: 2px solid #717d83; letter-spacing: -.15px;
  grid-template-columns: 48px 106px 64px 64px 48px 260px 48px 254px 50px 214px 48px 248px 50px 258px 64px 48px 258px 49px 63px 48px 508px 20px; }
.af { font: italic 700 20px "Liberation Sans", sans-serif; fill: #fff; }
.or { font: 700 9.500px "Liberation Sans", sans-serif; fill: #fff; }
.sfr { font: 700 15px "Liberation Sans", sans-serif; fill: #fff; letter-spacing: -1px; }

.page { flex: 1; margin: 0 -2px -2px; display: flex; flex-direction: column; align-items: center; background: linear-gradient(62deg, #efa63b 0%, #7c130d 100%); }
.page h1 { margin: 231px 0 0; font: 700 66px/92px "Noto Sans", sans-serif; letter-spacing: .5px; height: 92px; white-space: nowrap; }
.entry { display: flex; gap: 24px; margin-top: 241px; }
.entry input { width: 548px; height: 56px; border: 0; padding: 0; background: #fff; }
.entry button { width: 52px; height: 52px; border: 6px solid #fff; border-radius: 50%; background: transparent; padding: 0; display: grid; place-items: center; }

.dock { position: relative; width: 2672px; height: 110px; margin: 1px 0 0 104px; flex: none; display: flex; align-items: center; padding: 0 4px; border: 2px solid #564e48; border-radius: 30px; box-shadow: 0 0 0 1px rgba(0,0,0,.55), 0 0 60px rgba(30,25,10,.3);
  background:
    radial-gradient(ellipse 130px 70px at 340px 110px, rgba(120,66,28,.4), transparent),
    radial-gradient(ellipse 330px 200px at 340px 40px, rgba(116,62,30,.7), transparent),
    radial-gradient(ellipse 400px 100px at 1300px 110px, rgba(60,52,18,.5), transparent),
    linear-gradient(90deg, #322b26 0, #35291f 35%, #2e261c 50%, #261f1b 75%, #281e1a 100%); }
.app { position: relative; width: 92px; height: 110px; display: flex; justify-content: center; padding-top: 17px; flex: none; }
.app > svg { width: 72px; height: 72px; margin-top: -1px; filter: drop-shadow(0 1px 1px rgba(0,0,0,.3)); }
.app.run::after { content: ""; position: absolute; left: 42px; bottom: 4px; width: 8px; height: 8px; border-radius: 50%; background: #b3aba3; }
.rule { width: 2px; height: 82px; margin: 0 20px; background: #645c57; flex: none; }
.petals rect { mix-blend-mode: multiply; opacity: .92; }
.mon { font: 600 14.500px Inter, sans-serif; fill: #fff; }
.day { font: 300 44px Inter, sans-serif; fill: #222; letter-spacing: -2px; }
.word { font: 700 21px "Open Sans", sans-serif; fill: #fff; }
.adobe { font: 700 43px "Open Sans", sans-serif; letter-spacing: -1px; }
.dw { font-size: 41px; letter-spacing: -2px; }
.badge { position: absolute; right: -1px; top: 8px; width: 34px; height: 34px; border-radius: 50%; background: #de4b3b; font-size: 20px; display: grid; place-items: center; }
.app > .thumb { width: 82px; height: 48px; margin-top: 11px; }
.app > .mini { position: absolute; left: 59px; top: 63px; width: 27px; height: 27px; margin: 0; }
```
